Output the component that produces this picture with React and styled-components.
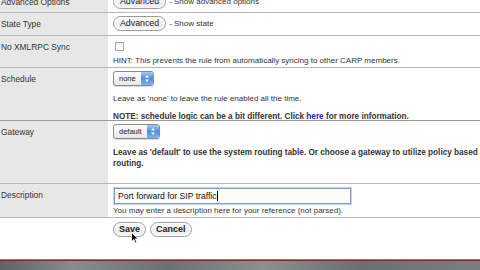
import React from 'react'
import styled, { createGlobalStyle } from 'styled-components'

const GlobalStyle = createGlobalStyle`
  html, body {
    margin: 0;
    padding: 0;
    background: #fff;
  }
  body {
    width: 480px;
    height: 270px;
    overflow: hidden;
    font-family: "Liberation Sans", Arial, sans-serif;
    font-size: 8px;
    color: #222;
  }
`

const Page = styled.div`
  display: flex;
  flex-direction: column;
  height: 270px;
  overflow: hidden;
`

const Table = styled.div`
  display: flex;
  flex-direction: column;
  margin-top: -9px;
`

const Row = styled.div`
  display: grid;
  grid-template-columns: 108px 1fr;
  height: ${p => p.h}px;
  overflow: hidden;
  border-bottom: 1px solid ${p => (p.dark ? '#9a9a9a' : '#b9b9b9')};
`

const Label = styled.div`
  background: #e7e7e7;
  color: #333;
  padding: 6px 0 0 1px;
  font-size: 8.4px;
`

const Cell = styled.div`
  display: flex;
  flex-direction: column;
  align-items: flex-start;
  padding: 3px 0 0 5px;
`

const Inline = styled.div`
  display: flex;
  align-items: center;
  gap: 3px;
  color: #333;
`

const PillButton = styled.button`
  font-family: inherit;
  font-size: ${p => (p.bold ? 9 : 8.8)}px;
  font-weight: ${p => (p.bold ? 700 : 400)};
  color: #222;
  height: 15px;
  padding: 0 ${p => (p.bold ? 5 : 6)}px;
  border: 1px solid #9c9c9c;
  border-radius: 8px;
  background: linear-gradient(#ffffff, #ececec 60%, #f6f6f6);
  box-shadow: inset 0 0 0 1px #fff;
  line-height: 13px;
`

const Check = styled.div`
  width: 7px;
  height: 7px;
  border: 1px solid #a8a8a8;
  background: linear-gradient(#f2f2f2, #fff);
  margin: 3px 0 0 2px;
`

const Text = styled.div`
  color: #333;
  font-weight: ${p => (p.bold ? 700 : 400)};
  line-height: ${p => p.lh || 11}px;
  margin-top: ${p => p.mt || 0}px;
  font-size: ${p => (p.bold ? 8.2 : 8)}px;
`

const Link = styled.span`
  color: #1a1ab0;
`

const SelectBox = styled.div`
  display: flex;
  align-items: center;
  height: 13px;
  border: 1px solid #8a8a8a;
  border-radius: 3px;
  background: linear-gradient(#fdfdfd, #e8e8e8);
  padding-left: 5px;
  font-size: 7.5px;
  color: #222;
  box-shadow: 0 1px 1px rgba(0,0,0,0.15);
`

const SelectValue = styled.span`
  margin-right: 5px;
`

const Stepper = styled.div`
  width: 12px;
  height: 13px;
  border-radius: 0 3px 3px 0;
  background: linear-gradient(#a8c8f0, #4f8ee0 50%, #7fb0f0);
  display: flex;
  align-items: center;
  justify-content: center;
`

const TextInput = styled.div`
  width: 232px;
  height: 14px;
  border: 1px solid #7f9dc2;
  box-shadow: 0 0 0 1px #c3d4ea;
  background: #fffdf6;
  font-size: 8.6px;
  line-height: 14px;
  padding-left: 3px;
  color: #111;
  margin: 1px 0 0 1px;
`

const Caret = styled.span`
  display: inline-block;
  width: 1px;
  height: 10px;
  background: #000;
  vertical-align: -2px;
`

const Buttons = styled.div`
  display: flex;
  gap: 4px;
  padding: 4px 0 0 113px;
  height: 37px;
  position: relative;
`

const Cursor = styled.svg`
  position: absolute;
  left: 131px;
  top: 14px;
`

const Bottom = styled.div`
  margin-top: auto;
  height: 10px;
  border-top: 1px solid #b56a6a;
  background: linear-gradient(90deg, #5e6466, #868c8c 15%, #6c7272 35%, #8a908e 55%, #6a7070 75%, #7a8080);
  box-shadow: inset 0 1px 0 #7a3030;
`

function Select({ value }) {
  return (
    <SelectBox>
      <SelectValue>{value}</SelectValue>
      <Stepper>
        <svg width="6" height="9" viewBox="0 0 6 9">
          <path d="M1 3.5 L3 1 L5 3.5 Z M1 5.5 L3 8 L5 5.5 Z" fill="#fff" />
        </svg>
      </Stepper>
    </SelectBox>
  )
}

export default function App() {
  return (
    <Page>
      <GlobalStyle />
      <Table>
        <Row h={21}>
          <Label>Advanced Options</Label>
          <Cell>
            <Inline>
              <PillButton>Advanced</PillButton>
              <span>- Show advanced options</span>
            </Inline>
          </Cell>
        </Row>
        <Row h={22}>
          <Label>State Type</Label>
          <Cell>
            <Inline>
              <PillButton>Advanced</PillButton>
              <span>- Show state</span>
            </Inline>
          </Cell>
        </Row>
        <Row h={31}>
          <Label>No XMLRPC Sync</Label>
          <Cell>
            <Check />
            <Text mt={4}>HINT: This prevents the rule from automatically syncing to other CARP members.</Text>
          </Cell>
        </Row>
        <Row h={52} dark>
          <Label>Schedule</Label>
          <Cell>
            <Select value="none" />
            <Text mt={7}>Leave as 'none' to leave the rule enabled all the time.</Text>
            <Text bold mt={7}>
              NOTE: schedule logic can be a bit different. Click <Link>here</Link> for more information.
            </Text>
          </Cell>
        </Row>
        <Row h={62}>
          <Label>Gateway</Label>
          <Cell>
            <Select value="default" />
            <Text bold mt={8} lh={11}>
              Leave as 'default' to use the system routing table. Or choose a gateway to utilize policy based
              <br />
              routing.
            </Text>
          </Cell>
        </Row>
        <Row h={33}>
          <Label>Description</Label>
          <Cell>
            <TextInput>
              Port forward for SIP traffic<Caret />
            </TextInput>
            <Text mt={2} lh={10}>You may enter a description here for your reference (not parsed).</Text>
          </Cell>
        </Row>
      </Table>
      <Buttons>
        <PillButton bold>Save</PillButton>
        <PillButton bold>Cancel</PillButton>
        <Cursor width="8" height="12" viewBox="0 0 8 12">
          <path d="M0.5 0.5 L0.5 9.5 L2.8 7.4 L4.4 11 L5.8 10.4 L4.2 6.9 L7.2 6.9 Z" fill="#000" stroke="#fff" strokeWidth="0.8" />
        </Cursor>
      </Buttons>
      <Bottom />
    </Page>
  )
}
